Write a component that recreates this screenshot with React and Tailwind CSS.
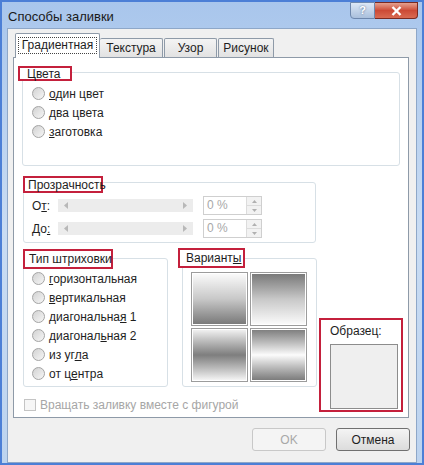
import React from 'react';

const FONT = { fontFamily: '"Liberation Sans", Arial, sans-serif' };

function Radio({ children }) {
  return (
    <div className="flex h-[19px] items-center">
      <span className="h-[13px] w-[13px] shrink-0 rounded-full border border-[#a4a4a4] bg-gradient-to-br from-[#d2d2d2] to-[#f6f6f6]" />
      <span className="ml-[4px] whitespace-nowrap text-[12px] text-[#1e1e1e]">{children}</span>
    </div>
  );
}

function RedLabel({ className, children }) {
  return (
    <span
      className={
        'absolute flex items-center whitespace-nowrap border-2 border-[#c4203c] bg-white text-[12px] leading-[14px] text-[#1e1e1e] ' +
        className
      }
    >
      {children}
    </span>
  );
}

function Slider() {
  return (
    <div className="flex h-[13px] w-[135px] items-center justify-between bg-[#ececec] px-[6px]">
      <svg width="4" height="7" viewBox="0 0 4 7">
        <path d="M4 0 L0 3.5 L4 7 Z" fill="#b8b8b8" />
      </svg>
      <svg width="4" height="7" viewBox="0 0 4 7">
        <path d="M0 0 L4 3.5 L0 7 Z" fill="#b8b8b8" />
      </svg>
    </div>
  );
}

function Spin() {
  return (
    <div className="flex h-[19px] w-[59px] border border-[#cfcfcf] bg-white">
      <span className="flex-1 pl-[3px] text-[12px] leading-[17px] text-[#a8a8a8]">0 %</span>
      <div className="flex w-[15px] flex-col border-l border-[#dcdcdc] bg-[#f2f2f2]">
        <span className="flex flex-1 items-center justify-center border-b border-[#dcdcdc]">
          <svg width="5" height="3" viewBox="0 0 5 3">
            <path d="M0 3 L2.5 0 L5 3 Z" fill="#b0b0b0" />
          </svg>
        </span>
        <span className="flex flex-1 items-center justify-center">
          <svg width="5" height="3" viewBox="0 0 5 3">
            <path d="M0 0 L2.5 3 L5 0 Z" fill="#b0b0b0" />
          </svg>
        </span>
      </div>
    </div>
  );
}

function Swatch({ className }) {
  return (
    <div className="h-[54px] w-[57px] border border-[#9c9c9c] p-px">
      <div className={'h-full w-full ' + className} />
    </div>
  );
}

export default function App() {
  return (
    <div
      style={FONT}
      className="flex h-[465px] w-[424px] flex-col overflow-hidden border-2 border-[#4c7fd6] bg-gradient-to-b from-[#a9c6ec] via-[#c9dcf3] to-[#bcd3ef]"
    >
      {/* title bar */}
      <div className="flex h-[26px] shrink-0 items-start justify-between pl-[6px] pr-[4px]">
        <span className="mt-[5px] text-[13px] text-[#1a1a1a]">Способы заливки</span>
        <div className="flex">
          <span className="flex h-[17px] w-[25px] items-center justify-center rounded-bl-[4px] border border-[#6d87ad] bg-gradient-to-b from-[#dde8f6] to-[#a9bfdc] text-[11px] font-bold text-white [text-shadow:0_0_2px_#44608a]">
            ?
          </span>
          <span className="flex h-[17px] w-[43px] items-center justify-center rounded-br-[4px] border border-l-0 border-[#7a2a22] bg-gradient-to-b from-[#e4a08f] via-[#cc4a36] to-[#d96a52]">
            <svg width="11" height="10" viewBox="0 0 11 10">
              <path d="M1.5 1 L9.5 9 M9.5 1 L1.5 9" stroke="#fff" strokeWidth="2.4" />
            </svg>
          </span>
        </div>
      </div>

      {/* client area */}
      <div className="mx-[5px] flex flex-1 flex-col border border-[#8ea7c8] bg-[#f0f0f0] pl-[5px]">
        {/* tabs */}
        <div className="flex h-[28px] shrink-0 items-end pl-[2px]">
          <div className="relative z-10 -mb-px flex h-[25px] w-[85px] items-start justify-center rounded-t-[2px] border border-b-0 border-[#8e9aa8] bg-white pt-[3px]">
            <span className="border border-dotted border-[#444] px-[3px] text-[12px] leading-[15px] text-[#1e1e1e]">
              Градиентная
            </span>
          </div>
          <div className="flex h-[19px] w-[63px] items-center justify-center rounded-t-[2px] border border-b-0 border-l-0 border-[#8e9aa8] bg-gradient-to-b from-[#f4f4f4] to-[#e2e2e2] text-[12px] text-[#1e1e1e]">
            Текстура
          </div>
          <div className="ml-px flex h-[19px] w-[53px] items-center justify-center rounded-t-[2px] border border-b-0 border-[#8e9aa8] bg-gradient-to-b from-[#f4f4f4] to-[#e2e2e2] text-[12px] text-[#1e1e1e]">
            Узор
          </div>
          <div className="ml-px flex h-[19px] w-[56px] items-center justify-center rounded-t-[2px] border border-b-0 border-[#8e9aa8] bg-gradient-to-b from-[#f4f4f4] to-[#e2e2e2] text-[12px] text-[#1e1e1e]">
            Рисунок
          </div>
        </div>

        {/* tab page */}
        <div className="flex h-[361px] w-[396px] shrink-0 flex-col border border-[#8e9aa8] bg-white">
          {/* Цвета */}
          <div className="relative ml-[8px] mt-[14px] h-[94px] w-[378px] shrink-0 rounded-[3px] border border-[#d7e0e6] pl-[9px] pt-[11px]">
            <RedLabel className="-left-[5px] -top-[7px] h-[15px] w-[54px] pl-[7px]">Цвета</RedLabel>
            <Radio><u>о</u>дин цвет</Radio>
            <Radio><u>д</u>ва цвета</Radio>
            <Radio><u>з</u>аготовка</Radio>
          </div>

          {/* Прозрачность */}
          <div className="relative ml-[9px] mt-[16px] h-[61px] w-[293px] shrink-0 rounded-[3px] border border-[#d7e0e6] pl-[8px] pt-[13px]">
            <RedLabel className="-left-px -top-[7px] h-[17px] w-[80px] pl-[3px]">Прозрачность</RedLabel>
            <div className="flex h-[19px] items-center">
              <span className="w-[26px] text-[12px] text-[#1e1e1e]">О<u>т</u>:</span>
              <Slider />
              <span className="ml-[10px]"><Spin /></span>
            </div>
            <div className="mt-[4px] flex h-[19px] items-center">
              <span className="w-[26px] text-[12px] text-[#1e1e1e]">До<u>:</u></span>
              <Slider />
              <span className="ml-[10px]"><Spin /></span>
            </div>
          </div>

          {/* bottom groups */}
          <div className="ml-[9px] mt-[15px] flex h-[129px] shrink-0 items-start">
            <div className="relative h-[129px] w-[145px] shrink-0 rounded-[3px] border border-[#d7e0e6] pl-[8px] pt-[10px]">
              <RedLabel className="-left-px -top-[10px] h-[20px] w-[90px] pl-[4px]">Тип штриховки</RedLabel>
              <Radio><u>г</u>оризонтальная</Radio>
              <Radio><u>в</u>ертикальная</Radio>
              <Radio>диагональна<u>я</u> 1</Radio>
              <Radio>диагонал<u>ь</u>ная 2</Radio>
              <Radio>из уг<u>л</u>а</Radio>
              <Radio>от ц<u>е</u>нтра</Radio>
            </div>

            <div className="relative ml-[14px] h-[129px] w-[135px] shrink-0 rounded-[3px] border border-[#d7e0e6] pl-[8px] pt-[13px]">
              <RedLabel className="-left-[5px] -top-[11px] h-[20px] w-[67px] pl-[6px]">Вариант<u>ы</u></RedLabel>
              <div className="grid w-[116px] grid-cols-2 gap-[2px]">
                <Swatch className="bg-gradient-to-b from-[#fafafa] via-[#c8c8c8] to-[#7a7a7a]" />
                <Swatch className="bg-gradient-to-b from-[#7a7a7a] via-[#c8c8c8] to-[#fafafa]" />
                <Swatch className="bg-gradient-to-b from-[#f0f0f0] via-[#7e7e7e] to-[#f4f4f4]" />
                <Swatch className="bg-gradient-to-b from-[#808080] via-[#fcfcfc] to-[#7c7c7c]" />
              </div>
            </div>

            <div className="ml-[2px] mt-[60px] flex h-[94px] w-[84px] shrink-0 flex-col border-2 border-[#c4203c] pl-[9px] pt-[4px]">
              <span className="text-[12px] leading-[15px] text-[#1e1e1e]">Образец:</span>
              <div className="mt-[5px] h-[65px] w-[68px] border border-[#8c8c8c] bg-[#efefef]" />
            </div>
          </div>

          {/* checkbox */}
          <div className="ml-[10px] mt-[9px] flex shrink-0 items-center">
            <span className="h-[12px] w-[12px] border border-[#c4c4c4] bg-[#f6f6f6]" />
            <span className="ml-[4px] text-[12px] text-[#a6a6a6]">Вращать заливку вместе с фигурой</span>
          </div>
        </div>

        {/* buttons */}
        <div className="mt-[10px] flex w-[397px] shrink-0 justify-end gap-[10px]">
          <button className="h-[23px] w-[74px] rounded-[3px] border border-[#c8c8c8] bg-[#f4f4f4] text-[12px] text-[#a8a8a8]">
            OK
          </button>
          <button className="h-[23px] w-[74px] rounded-[3px] border border-[#707070] bg-gradient-to-b from-[#f4f4f4] to-[#dcdcdc] text-[12px] text-[#1e1e1e]">
            Отмена
          </button>
        </div>
      </div>
    </div>
  );
}
